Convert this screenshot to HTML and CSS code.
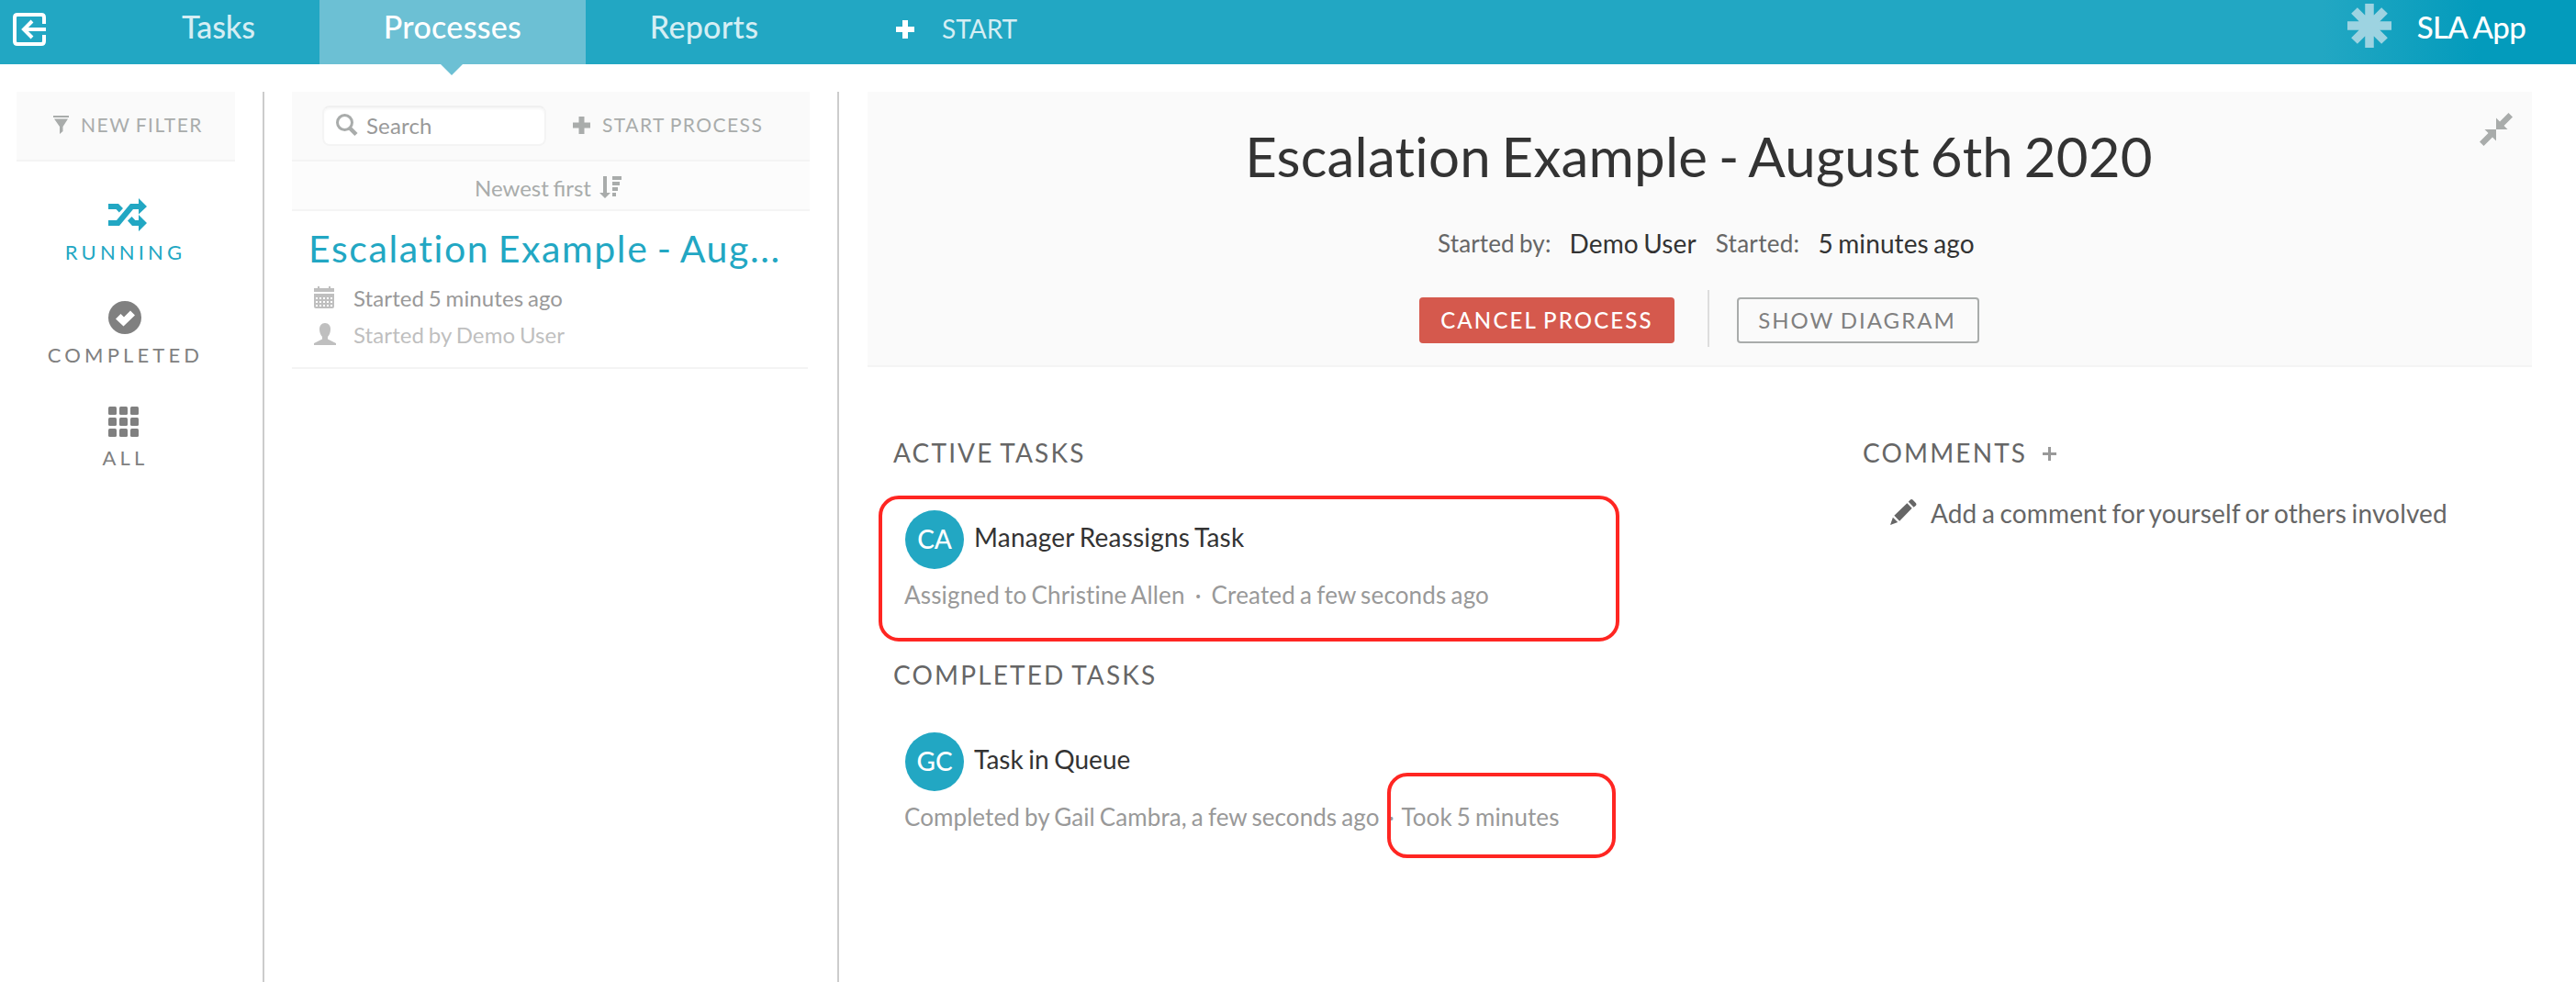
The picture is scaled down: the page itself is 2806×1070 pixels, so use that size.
FILE: index.html
```html
<!DOCTYPE html>
<html lang="en">
<head>
<meta charset="utf-8">
<title>Processes</title>
<link rel="stylesheet" href="styles.css">
</head>
<body>
<header class="topbar">
  <svg class="exit-icon" width="36" height="36" viewBox="0 0 36 36"><path d="M34 12V5q0-3-3-3H5Q2 2 2 5v26q0 3 3 3h26q3 0 3-3v-7" fill="none" stroke="#fff" stroke-width="4"/><path d="M36 18H13M21 9l-9 9 9 9" fill="none" stroke="#fff" stroke-width="4"/></svg>
  <nav class="tabs">
    <a class="tab">Tasks</a>
    <a class="tab tab-active">Processes</a>
    <a class="tab tab-reports">Reports</a>
  </nav>
  <a class="start">
    <svg width="20" height="20" viewBox="0 0 20 20"><path d="M7 0h6v7h7v6h-7v7H7v-7H0V7h7z" fill="#fff"/></svg>
    <span>START</span>
  </a>
  <div class="account">
    <svg width="48" height="48" viewBox="-24 -24 48 48"><path d="M0-24V24M-24 0H24M-16.500-16.500 16.500 16.500M16.500-16.500-16.500 16.500" stroke="#9dd3e1" stroke-width="9.500" fill="none"/></svg>
    <span class="account-name">SLA App</span>
  </div>
</header>
<div class="layout">
  <aside class="filters">
    <a class="new-filter">
      <svg width="17" height="20" viewBox="0 0 17 20"><path d="M0 0h17v2H0zM1 3.500h15L10.500 12v5L7 20v-8z" fill="#a9acab"/></svg>
      <span>NEW FILTER</span>
    </a>
    <a class="filter filter-active">
      <svg width="44" height="44" viewBox="0 0 44 44"><path d="M33 4l9 9-9 8.500V16h-6L12 34H0v-6h9L24 10h9zM0 10h11l5 5-4.200 4.400L8.500 16H0zM25.500 24l3.800 4H33v-6l9 9-9 9v-6h-7l-5-5.500z" fill="#22a7c3"/></svg>
      <span>RUNNING</span>
    </a>
    <a class="filter">
      <svg width="44" height="44" viewBox="0 0 44 44"><circle cx="18" cy="22" r="18" fill="#808080"/><path d="M8 23.500l5.500-5.500 3.500 3.500 7-7 5 5-12.500 12z" fill="#fff"/></svg>
      <span>COMPLETED</span>
    </a>
    <a class="filter">
      <svg width="44" height="44" viewBox="0 0 44 44"><g fill="#808080"><rect y="7" width="9" height="9" rx="1.500"/><rect x="12" y="7" width="9" height="9" rx="1.500"/><rect x="24" y="7" width="9" height="9" rx="1.500"/><rect y="19" width="9" height="9" rx="1.500"/><rect x="12" y="19" width="9" height="9" rx="1.500"/><rect x="24" y="19" width="9" height="9" rx="1.500"/><rect y="31" width="9" height="9" rx="1.500"/><rect x="12" y="31" width="9" height="9" rx="1.500"/><rect x="24" y="31" width="9" height="9" rx="1.500"/></g></svg>
      <span>ALL</span>
    </a>
  </aside>
  <section class="list">
    <div class="list-tools">
      <div class="search">
        <svg width="24" height="24" viewBox="0 0 24 24"><circle cx="9.500" cy="9.500" r="8" fill="none" stroke="#a9acab" stroke-width="3"/><path d="M15 15.500l7 7" stroke="#a9acab" stroke-width="4.500"/></svg>
        <span>Search</span>
      </div>
      <a class="start-process">
        <svg width="19" height="19" viewBox="0 0 19 19"><path d="M6.500 0h6v6.500H19v6h-6.500V19h-6v-6.500H0v-6h6.500z" fill="#a9acab"/></svg>
        <span>START PROCESS</span>
      </a>
    </div>
    <div class="sort">
      <span>Newest first</span>
      <svg width="24" height="24" viewBox="0 0 24 24"><path d="M4 0h4v18h4l-6 6-6-6h4zM14 0h10v4H14zM14 6h8v4h-8zM14 12h6v4h-6zM14 18h4v4h-4z" fill="#a9acab"/></svg>
    </div>
    <article class="card">
      <h2 class="card-title">Escalation Example - Aug...</h2>
      <p class="card-row card-date">
        <svg width="24" height="24" viewBox="0 0 24 24"><path fill-rule="evenodd" d="M0 2h4V0h2v2h10V0h2v2h4v4H0zM0 8h22v14q0 2-2 2H2q-2 0-2-2zM2 12v2h2v-2zM6 12v2h2v-2zM10 12v2h2v-2zM14 12v2h2v-2zM18 12v2h2v-2zM2 16v2h2v-2zM6 16v2h2v-2zM10 16v2h2v-2zM14 16v2h2v-2zM18 16v2h2v-2zM2 20v2h2v-2zM6 20v2h2v-2zM10 20v2h2v-2zM14 20v2h2v-2zM18 20v2h2v-2z" fill="#bfbfbf"/></svg>
        <span>Started 5 minutes ago</span>
      </p>
      <p class="card-row card-user">
        <svg width="24" height="24" viewBox="0 0 24 24"><path d="M12 0c4 0 6 3 6 6.500 0 3.500-1 6.500-3 8.500v2.500l9 4.500v2H0v-2l9-4.500V15c-2-2-3-5-3-8.500C6 3 8 0 12 0z" fill="#bfbfbf"/></svg>
        <span>Started by Demo User</span>
      </p>
    </article>
  </section>
  <main class="detail">
    <div class="hero">
      <svg class="collapse" width="36" height="36" viewBox="0 0 36 36"><path d="M18 18V5.500l4 4L31.500 0 36 4.500 26.500 14l4 4zM18 18v12.500l-4-4L4.500 36 0 31.500 9.500 22l-4-4z" fill="#a9acab"/></svg>
      <h1 class="hero-title">Escalation Example - August 6th 2020</h1>
      <div class="meta">
        <span class="meta-label">Started by:</span><span class="meta-value">Demo User</span>
        <span class="meta-label meta-short">Started:</span><span class="meta-value">5 minutes ago</span>
      </div>
      <div class="actions">
        <button class="btn btn-cancel">CANCEL PROCESS</button>
        <i class="split"></i>
        <button class="btn btn-diagram">SHOW DIAGRAM</button>
      </div>
    </div>
    <div class="columns">
      <section class="tasks">
        <h3 class="heading">ACTIVE TASKS</h3>
        <article class="task">
          <div class="task-head"><span class="avatar">CA</span><span class="task-name">Manager Reassigns Task</span></div>
          <p class="task-info"><span>Assigned to Christine Allen</span><span class="dot dot-wide">·</span><span>Created a few seconds ago</span></p>
          <i class="mark mark-task"></i>
        </article>
        <h3 class="heading">COMPLETED TASKS</h3>
        <article class="task">
          <div class="task-head"><span class="avatar">GC</span><span class="task-name task-queue">Task in Queue</span></div>
          <p class="task-info info-done"><span>Completed by Gail Cambra, a few seconds ago</span><span class="dot">·</span><span>Took 5 minutes</span></p>
          <i class="mark mark-took"></i>
        </article>
      </section>
      <section class="comments">
        <h3 class="heading comments-heading">COMMENTS
          <svg width="15" height="15" viewBox="0 0 15 15"><path d="M7.500 0v15M0 7.500h15" stroke="#999" stroke-width="3"/></svg>
        </h3>
        <p class="add-comment">
          <svg width="29" height="29" viewBox="0 0 30 30"><path d="M0 30l3-8.500 5.500 5.500zM4.500 19.500 19 5.500l5.500 5.500L10.500 25.500zM20.500 4l2.200-2.500q1.300-1 2.600 0L29 5.500q1 1.500 0 2.500L26.500 10z" fill="#666"/></svg>
          <span>Add a comment for yourself or others involved</span>
        </p>
      </section>
    </div>
  </main>
</div>
</body>
</html>
```
FILE: styles.css
```css
* { box-sizing: border-box; word-spacing: -.063em; }
body { margin: 0; background: #fff; color: #333; font-family: Lato, "Liberation Sans", sans-serif; overflow: hidden; }
h1, h2, h3, p { margin: 0; font-weight: 400; }
svg { display: block; flex: none; overflow: visible; }

.topbar { display: flex; height: 70px; background: linear-gradient(90deg, #22a7c3 2530px, #039bbc 2700px); color: #d5eef4; white-space: nowrap; }
.exit-icon { margin: 14px 78px 0 14px; }
.tabs { display: flex; font-size: 34px; font-weight: 500; line-height: 58px; letter-spacing: .3px; }
.tab { width: 220px; text-align: center; }
.tab:first-child { letter-spacing: -.1px; }
.tab-active { position: relative; width: 290px; background: #6cc0d4; color: #fff; }
.tab-active::after { content: ""; position: absolute; left: 132px; top: 70px; border: solid transparent; border-width: 12px 12px 0; border-top-color: #6cc0d4; }
.tab-reports { width: 258px; }
.start { display: flex; gap: 30px; margin-left: 80px; font-size: 28px; line-height: 62px; }
.start svg { margin-top: 22px; }
.account { display: flex; gap: 28px; margin-left: auto; margin-right: 55px; color: #fff; font-size: 33px; font-weight: 500; line-height: 59px; letter-spacing: -.7px; }
.account svg { margin-top: 4px; }
.account-name { word-spacing: 0; }

.layout { display: flex; height: 970px; margin-top: 30px; }
.filters { width: 288px; padding: 0 30px 0 18px; border-right: 2px solid #ccc; }
.new-filter { display: flex; gap: 13px; height: 76px; padding-left: 40px; margin-bottom: 36px; background: #fafafa; border-bottom: 2px solid #f4f4f4; color: #a9acab; font-size: 21px; line-height: 72px; letter-spacing: 1.5px; }
.new-filter svg { margin-top: 26px; }
.filter { display: block; height: 112px; padding-right: 1px; color: #808080; font-size: 22px; line-height: 26px; letter-spacing: 4.15px; text-align: center; }
.filter svg { margin: 0 0 6px 100px; }
.filter-active { color: #22a7c3; }

.list { width: 626px; padding: 0 30px; border-right: 2px solid #ccc; white-space: nowrap; }
.list-tools { display: flex; width: 564px; height: 76px; padding: 15px 0 0 33px; background: #fafafa; border-bottom: 2px solid #f4f4f4; color: #a9acab; }
.search { display: flex; gap: 9px; width: 244px; height: 44px; padding-left: 13px; background: #fff; border: 2px solid #f4f4f4; border-top-color: #f0f0f0; border-radius: 8px; box-shadow: inset 0 2px 2px #f7f7f7; color: #999; font-size: 24px; line-height: 40px; letter-spacing: .15px; }
.search svg { margin-top: 7px; }
.start-process { display: flex; gap: 13px; margin-left: 29px; font-size: 21px; line-height: 42px; letter-spacing: 1.45px; }
.start-process svg { margin-top: 12px; }
.sort { display: flex; gap: 9px; width: 564px; height: 54px; padding: 6px 0 0 199px; background: #fcfcfc; border-bottom: 2px solid #f4f4f4; color: #a9acab; font-size: 24px; line-height: 46px; }
.sort svg { margin-top: 10px; }
.card { width: 562px; height: 172px; padding: 16px 18px 0; border-bottom: 2px solid #f4f4f4; }
.card-title { margin-bottom: 9px; color: #22a7c3; font-size: 41px; line-height: 50px; letter-spacing: 1.58px; }
.card-row { display: flex; gap: 19px; padding-left: 6px; font-size: 24px; line-height: 40px; letter-spacing: .1px; }
.card-row svg { margin-top: 7px; }
.card-date { color: #999; }
.card-user { color: #bfbfbf; }

.detail { width: 1813px; margin-left: 31px; white-space: nowrap; }
.hero { position: relative; height: 300px; padding-top: 30px; background: #fafafa; border-bottom: 2px solid #f4f4f4; }
.collapse { position: absolute; right: 21px; top: 23px; }
.hero-title { padding-right: 2px; text-align: center; font-size: 60px; line-height: 80px; letter-spacing: .2px; }
.meta { display: flex; margin-top: 35px; padding-left: 621px; line-height: 40px; }
.meta-label { margin-right: 20px; color: #666; font-size: 26px; letter-spacing: .15px; }
.meta-short { letter-spacing: .3px; }
.meta-value { margin-right: 21px; font-size: 28px; letter-spacing: .1px; }
.actions { display: flex; align-items: flex-end; height: 62px; margin-top: 31px; padding-left: 601px; }
.btn { height: 50px; margin-bottom: 4px; padding: 0; border: 0; border-radius: 4px; font: 24px/49px Lato, "Liberation Sans", sans-serif; }
.btn-cancel { width: 278px; padding-bottom: 1px; background: #d5594d; color: #fff; font-weight: 500; letter-spacing: 2.15px; }
.btn-diagram { width: 264px; padding: 0 2px 1px 0; border: 2px solid #a9acab; background: #fafafa; color: #808080; line-height: 45px; letter-spacing: 2.02px; }
.split { width: 2px; height: 62px; margin: 0 30px 0 36px; background: #ddd; }

.columns { display: flex; padding: 73px 0 0 28px; }
.tasks { width: 1056px; }
.heading { color: #666; font-size: 28px; line-height: 40px; letter-spacing: 2.15px; }
.task { position: relative; height: 159px; margin: 43px 0 0 12px; }
.task-head { display: flex; gap: 11px; margin-left: 1px; }
.avatar { width: 64px; height: 64px; border-radius: 50%; background: #22a7c3; color: #fff; font-size: 28px; font-weight: 500; line-height: 63px; text-align: center; }
.task-name { font-size: 28px; line-height: 58px; letter-spacing: .2px; }
.task-queue { letter-spacing: .05px; }
.task-info { display: flex; margin-top: 8px; color: #999; font-size: 26px; line-height: 40px; letter-spacing: .15px; }
.info-done { letter-spacing: .08px; }
.dot { width: 24px; padding-left: 2px; text-align: center; }
.dot-wide { width: 29px; padding: 0; }
.mark { position: absolute; border: 4px solid #ff2622; border-radius: 22px; }
.mark-task { left: -28px; top: -16px; width: 807px; height: 159px; }
.mark-took { left: 526px; top: 44px; width: 249px; height: 93px; }
.comments-heading { display: flex; gap: 17px; }
.comments-heading svg { margin-top: 14px; }
.add-comment { display: flex; gap: 15px; margin: 26px 0 0 30px; color: #666; font-size: 28px; line-height: 40px; letter-spacing: .14px; }
.add-comment svg { margin-top: 4px; }
```
